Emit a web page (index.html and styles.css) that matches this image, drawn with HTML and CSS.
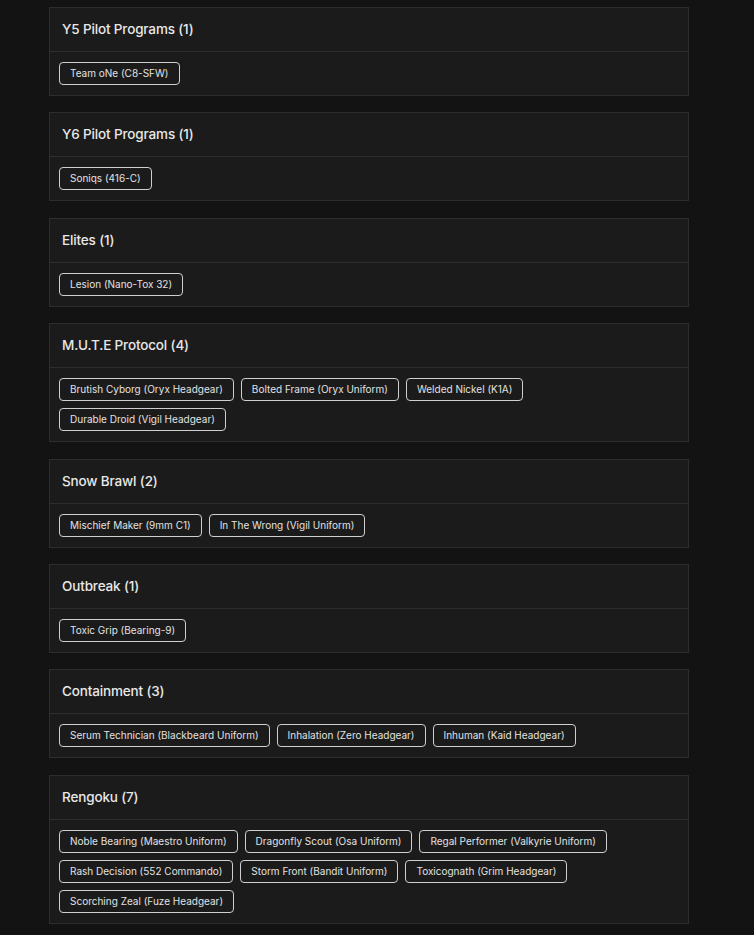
FILE: index.html
```html
<!DOCTYPE html>
<html>
<head>
<meta charset="utf-8">
<link rel="stylesheet" href="styles.css">
</head>
<body>
<div class="list">
  <section class="card">
    <h2 class="card-title">Y5 Pilot Programs (1)</h2>
    <div class="chips"><span class="chip">Team oNe (C8-SFW)</span></div>
  </section>
  <section class="card">
    <h2 class="card-title">Y6 Pilot Programs (1)</h2>
    <div class="chips"><span class="chip">Soniqs (416-C)</span></div>
  </section>
  <section class="card">
    <h2 class="card-title">Elites (1)</h2>
    <div class="chips"><span class="chip">Lesion (Nano-Tox 32)</span></div>
  </section>
  <section class="card">
    <h2 class="card-title">M.U.T.E Protocol (4)</h2>
    <div class="chips">
      <span class="chip">Brutish Cyborg (Oryx Headgear)</span>
      <span class="chip">Bolted Frame (Oryx Uniform)</span>
      <span class="chip">Welded Nickel (K1A)</span>
      <span class="chip">Durable Droid (Vigil Headgear)</span>
    </div>
  </section>
  <section class="card">
    <h2 class="card-title">Snow Brawl (2)</h2>
    <div class="chips">
      <span class="chip">Mischief Maker (9mm C1)</span>
      <span class="chip">In The Wrong (Vigil Uniform)</span>
    </div>
  </section>
  <section class="card">
    <h2 class="card-title">Outbreak (1)</h2>
    <div class="chips"><span class="chip">Toxic Grip (Bearing-9)</span></div>
  </section>
  <section class="card">
    <h2 class="card-title">Containment (3)</h2>
    <div class="chips">
      <span class="chip">Serum Technician (Blackbeard Uniform)</span>
      <span class="chip">Inhalation (Zero Headgear)</span>
      <span class="chip">Inhuman (Kaid Headgear)</span>
    </div>
  </section>
  <section class="card">
    <h2 class="card-title">Rengoku (7)</h2>
    <div class="chips">
      <span class="chip">Noble Bearing (Maestro Uniform)</span>
      <span class="chip">Dragonfly Scout (Osa Uniform)</span>
      <span class="chip">Regal Performer (Valkyrie Uniform)</span>
      <span class="chip">Rash Decision (552 Commando)</span>
      <span class="chip">Storm Front (Bandit Uniform)</span>
      <span class="chip">Toxicognath (Grim Headgear)</span>
      <span class="chip">Scorching Zeal (Fuze Headgear)</span>
    </div>
  </section>
</div>
</body>
</html>
```

FILE: styles.css
```css
html, body {
  margin: 0;
  padding: 0;
  background: #131313;
}
body {
  font-family: Inter, "Noto Sans", "Liberation Sans", sans-serif;
  color: #e6e6e6;
}
.list {
  width: 640px;
  margin-left: 49px;
  padding-top: 7px;
  display: flex;
  flex-direction: column;
  gap: 16.4px;
}
.card {
  background: #1b1b1b;
  border: 1px solid #2d2d2d;
}
.card-title {
  margin: 0;
  height: 43px;
  line-height: 43px;
  padding: 0 12px;
  font-size: 13.5px;
  font-weight: 500;
  letter-spacing: -0.15px;
  color: #e8e8e8;
  border-bottom: 1px solid #2d2d2d;
}
.chips {
  padding: 10px 9px;
  display: flex;
  flex-wrap: wrap;
  gap: 7px;
}
.chip {
  display: inline-block;
  height: 21px;
  line-height: 21px;
  padding: 0 10px;
  border: 1px solid #cfcfcf;
  border-radius: 4px;
  font-size: 10px;
  letter-spacing: 0;
  color: #e2e2e2;
}
```
